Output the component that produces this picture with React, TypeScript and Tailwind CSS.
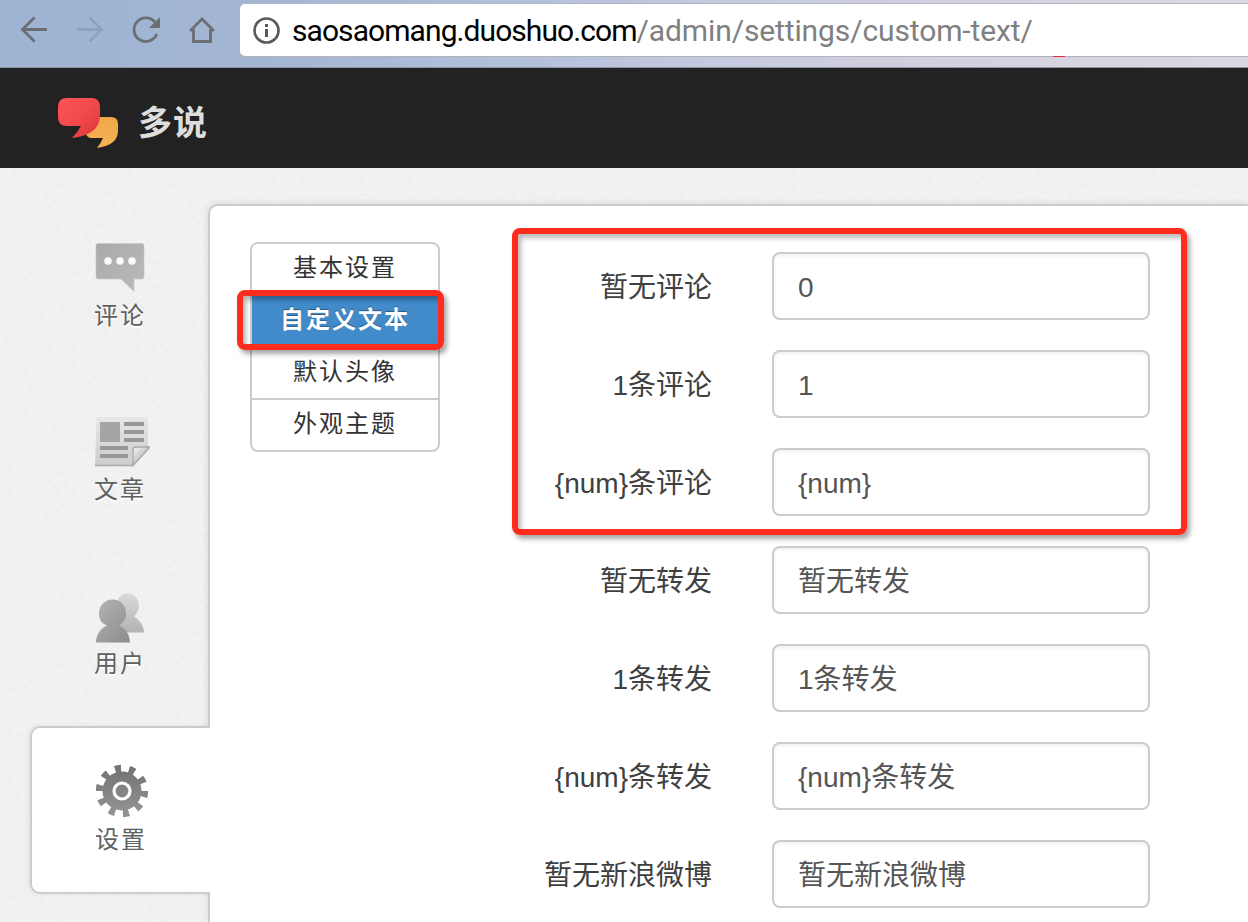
import React from "react";

const fields = [
  { label: "暂无评论", value: "0" },
  { label: "1条评论", value: "1" },
  { label: "{num}条评论", value: "{num}" },
  { label: "暂无转发", value: "暂无转发" },
  { label: "1条转发", value: "1条转发" },
  { label: "{num}条转发", value: "{num}条转发" },
  { label: "暂无新浪微博", value: "暂无新浪微博" },
];

function BrowserBar() {
  return (
    <div className="flex h-[68px] shrink-0 items-start border-b border-[#8d93a3] bg-[linear-gradient(100deg,#9db4d2_0%,#a3b6d4_22%,#b3c0da_42%,#c6cadf_58%,#d3d0df_75%,#dcd8e2_100%)]">
      <svg className="h-[60px] w-[240px] shrink-0" viewBox="0 0 240 60" fill="none" stroke="#6b6e73" strokeWidth="2.8">
        <path d="M47 29.5H22.5M34.500 17.500L22.500 29.500L34.500 41.500" />
        <path d="M77 29.500H101.500M89.500 17.500L101.500 29.500L89.500 41.500" stroke="#8ea2bf" />
        <path d="M155 22.200A11.800 11.800 0 1 0 156.800 34" />
        <path d="M160 17V28H149Z" fill="#6b6e73" stroke="none" />
        <path d="M190 31L202 19L214 31M193.500 29V41.500H210.500V29" />
      </svg>
      <div className="mt-1 flex h-[52px] flex-1 items-center overflow-hidden rounded-l-[5px] bg-white shadow-[0_1px_0_#b2b3ba,0_-1px_0_#b0b8c7]">
        <svg className="ml-[12px] h-[30px] w-[30px] shrink-0" viewBox="0 0 30 30">
          <circle cx="14.500" cy="15.500" r="12" fill="none" stroke="#5a5a5a" strokeWidth="2.700" />
          <path d="M13 9H16V12H13ZM13 14H16V22H13Z" fill="#5a5a5a" />
        </svg>
        <span className="ml-[10px] mt-[2px] whitespace-nowrap font-[Roboto,sans-serif] text-[30px] leading-none text-black">
          <span className="tracking-[-0.93px]">saosaomang.duoshuo.com</span>
          <span className="tracking-[-0.12px] text-[#808080]">/admin/settings/custom-text/</span>
        </span>
      </div>
      <div className="absolute left-[1053px] top-[56px] h-px w-[12px] bg-[#d9343c]" />
    </div>
  );
}

function Logo() {
  return (
    <svg className="mt-[12px] h-[52px] w-[62px]" viewBox="0 0 62 52">
      <defs>
        <linearGradient id="red" x1="0" y1="0" x2="1" y2="1">
          <stop offset="0" stopColor="#fb5357" />
          <stop offset="0.5" stopColor="#f2494d" />
          <stop offset="1" stopColor="#da3638" />
        </linearGradient>
        <linearGradient id="gold" x1="0" y1="0" x2="0" y2="1">
          <stop offset="0" stopColor="#eda848" />
          <stop offset="1" stopColor="#f7b254" />
        </linearGradient>
      </defs>
      <path d="M36 19H53Q60 19 60 26V33Q60 47 39 50Q43 45 45 40H34Q28 40 28 34Z" fill="url(#gold)" />
      <path d="M9 0H33Q42 0 42 9V17Q42 37 14 40Q20 34 23 28H9Q0 28 0 19V9Q0 0 9 0Z" fill="url(#red)" />
    </svg>
  );
}

function CommentIcon() {
  return (
    <svg className="h-[56px] w-[60px]" viewBox="0 0 60 56">
      <defs>
        <linearGradient id="bubble" x1="0" y1="0" x2="1" y2="1">
          <stop offset="0" stopColor="#a9a9a9" />
          <stop offset="1" stopColor="#bbb" />
        </linearGradient>
      </defs>
      <path d="M8 3.500H52Q54 3.500 54 5.500V37Q54 39 52 39H44V51.500L31 39H8Q6 39 6 37V5.500Q6 3.500 8 3.500Z" fill="url(#bubble)" stroke="#c8c8c8" strokeWidth="0.600" />
      <g fill="#fafafa">
        <circle cx="18" cy="21" r="3.800" />
        <circle cx="30" cy="21" r="3.800" />
        <circle cx="42" cy="21" r="3.800" />
      </g>
    </svg>
  );
}

function ArticleIcon() {
  return (
    <svg className="h-[56px] w-[60px]" viewBox="0 0 60 56">
      <defs>
        <linearGradient id="paper" x1="0" y1="0" x2="0" y2="1">
          <stop offset="0" stopColor="#e6e6e6" />
          <stop offset="1" stopColor="#cdcdcd" />
        </linearGradient>
        <linearGradient id="fold" x1="0" y1="0" x2="1" y2="1">
          <stop offset="0" stopColor="#f6f6f6" />
          <stop offset="0.6" stopColor="#bdbdbd" />
        </linearGradient>
      </defs>
      <path d="M6.500 3H58V33L43 52H5Z" fill="url(#paper)" />
      <path d="M5 51.500H43" stroke="#aaa" strokeWidth="1.500" />
      <path d="M10 8H30V28H10Z" fill="#a5a5a5" />
      <path d="M34 10H54M34 18H54M34 26H54M10 34H38M10 42H38" stroke="#989898" strokeWidth="3.800" />
      <path d="M43 51.500V36Q43 33 46 33H60Z" fill="url(#fold)" stroke="#a8a8a8" strokeWidth="1.300" />
    </svg>
  );
}

function UsersIcon() {
  return (
    <svg className="h-[56px] w-[60px]" viewBox="0 0 60 56">
      <defs>
        <linearGradient id="front" x1="0" y1="0" x2="1" y2="1">
          <stop offset="0" stopColor="#b4b4b4" />
          <stop offset="1" stopColor="#8b8b8b" />
        </linearGradient>
        <linearGradient id="back" x1="0" y1="0" x2="0" y2="1">
          <stop offset="0" stopColor="#dadada" />
          <stop offset="1" stopColor="#b2b2b2" />
        </linearGradient>
      </defs>
      <g transform="translate(0 2.500)">
        <path d="M27 42V31L31 26C26 21 25 13 29 7C33 2 41 1 46 7C51 13 49 21 44 26C49 29 54 35 54 42Z" fill="url(#back)" />
        <path d="M6 52C6 45 10 38 17 35C11 33 9 28 9 23C9 15 15 9 22.500 9C30 9 36 15 36 23C36 28 34 32 29 35C36 38 40 45 40 52Z" fill="url(#front)" />
      </g>
    </svg>
  );
}

function GearIcon() {
  return (
    <svg className="h-[56px] w-[60px]" viewBox="0 0 60 56">
      <defs>
        <linearGradient id="gear" x1="0" y1="0" x2="0" y2="1">
          <stop offset="0" stopColor="#747474" />
          <stop offset="1" stopColor="#929292" />
        </linearGradient>
      </defs>
      <circle cx="32" cy="29" r="19.500" fill="url(#gear)" />
      <circle
        cx="32"
        cy="29"
        r="22.200"
        fill="none"
        stroke="url(#gear)"
        strokeWidth="8"
        pathLength="200"
        strokeDasharray="8.6 11.4"
        transform="rotate(0 32 29)"
      />
      <circle cx="32" cy="29" r="8" fill="#858585" stroke="#fff" strokeWidth="3.200" />
    </svg>
  );
}

function SideItem({ icon, label }: { icon: React.ReactNode; label: string }) {
  return (
    <a className="flex h-[174px] flex-col pl-[90px] text-[24px] leading-[34px] tracking-[2px] text-[#606060] [text-shadow:0_2px_0_#fff]">
      {icon}
      <span className="ml-1 mt-[3px]">{label}</span>
    </a>
  );
}

function Sidebar() {
  return (
    <aside className="relative z-10 w-[208px] shrink-0 pt-[72px]">
      <SideItem icon={<CommentIcon />} label="评论" />
      <SideItem icon={<ArticleIcon />} label="文章" />
      <SideItem icon={<UsersIcon />} label="用户" />
      <a className="-mr-[2px] -mt-[36px] ml-[30px] flex h-[168px] flex-col rounded-l-[10px] border-2 border-r-0 border-[#ccc] bg-white pl-[58px] pt-[34px] text-[24px] leading-[34px] tracking-[2px] text-[#606060] shadow-[-2px_0_5px_rgba(0,0,0,0.06)]">
        <GearIcon />
        <span className="ml-[5px] mt-[5px]">设置</span>
      </a>
    </aside>
  );
}

function SubNav() {
  return (
    <div className="relative h-[210px] w-[190px] shrink-0">
      <ul className="flex h-full flex-col divide-y-2 divide-[#ccc] overflow-hidden rounded-[8px] border-2 border-[#ccc] text-center text-[24px] leading-[48px] tracking-[2px] text-[#333]">
        <li className="h-[52px]">基本设置</li>
        <li className="h-[52px] border-[#428bca] bg-[#428bca] font-bold text-white [text-shadow:0_-1px_1px_rgba(0,0,0,0.35)]">自定义文本</li>
        <li className="h-[52px]">默认头像</li>
        <li className="h-[50px]">外观主题</li>
      </ul>
      <div className="absolute -left-[13px] top-[48px] h-[60px] w-[207px] rounded-[8px] border-[6px] border-[#fe2c1c] shadow-[3px_4px_5px_rgba(0,0,0,0.35),inset_3px_4px_5px_rgba(0,0,0,0.3)]" />
    </div>
  );
}

function Form() {
  return (
    <div className="relative flex flex-1 flex-col gap-[30px] pt-[10px]">
      {fields.map((f) => (
        <div key={f.label} className="flex h-[68px] items-center">
          <label className="w-[272px] shrink-0 whitespace-nowrap pt-[3px] text-right text-[28px] leading-[40px] text-[#404040]">{f.label}</label>
          <div className="ml-[60px] flex h-[68px] w-[378px] shrink-0 items-center rounded-[8px] border-2 border-[#ccc] bg-white pl-[24px] pt-[3px] text-[28px] leading-[40px] text-[#555] shadow-[inset_0_2px_3px_rgba(0,0,0,0.06)]">
            {f.value}
          </div>
        </div>
      ))}
      <div className="absolute left-[72px] top-[-14px] h-[307px] w-[675px] rounded-[8px] border-[6px] border-[#fe2c1c] shadow-[3px_4px_5px_rgba(0,0,0,0.35),inset_3px_4px_5px_rgba(0,0,0,0.28)]" />
    </div>
  );
}

function PaperTexture() {
  return (
    <svg className="absolute inset-0 h-full w-full">
      <filter id="grain" x="0" y="0" width="100%" height="100%">
        <feTurbulence type="fractalNoise" baseFrequency="0.25" numOctaves="2" seed="4" />
        <feColorMatrix type="matrix" values="0 0 0 0 0.45  0 0 0 0 0.45  0 0 0 0 0.45  0.13 0 0 0 -0.03" />
      </filter>
      <rect width="100%" height="100%" filter="url(#grain)" />
    </svg>
  );
}

export default function App() {
  return (
    <div className="relative flex h-[922px] w-[1248px] flex-col overflow-hidden font-['Liberation_Sans','Noto_Sans_CJK_SC',sans-serif]">
      <BrowserBar />
      <header className="flex h-[100px] shrink-0 items-center bg-[#222] pl-[58px]">
        <Logo />
        <span className="ml-[18px] mt-[10px] text-[34px] font-bold leading-none tracking-[1px] text-[#dedede]">多说</span>
      </header>
      <main className="relative flex min-h-0 flex-1 bg-[#f3f3f3]">
        <PaperTexture />
        <Sidebar />
        <section className="relative mt-[36px] flex flex-1 items-start rounded-tl-[10px] border-l-2 border-t-2 border-[#ccc] bg-white pl-[40px] pt-[36px] shadow-[-1px_-1px_6px_rgba(0,0,0,0.09)]">
          <SubNav />
          <Form />
        </section>
      </main>
    </div>
  );
}
